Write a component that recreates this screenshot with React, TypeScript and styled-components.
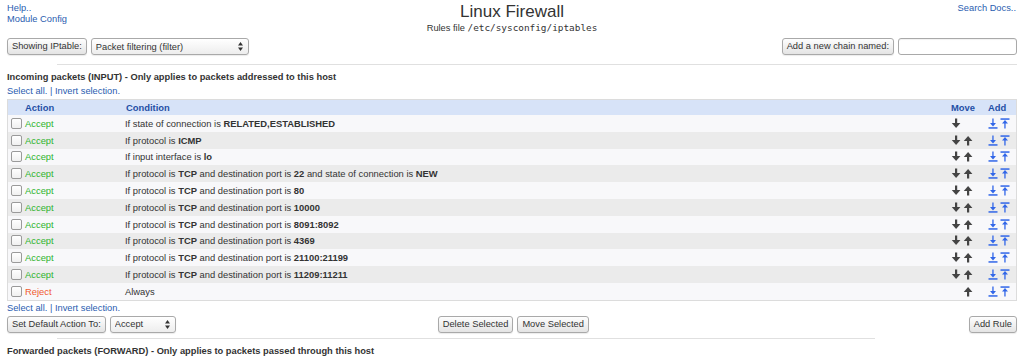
import React from "react";
import styled, { createGlobalStyle } from "styled-components";

const Global = createGlobalStyle`
  html, body { margin: 0; padding: 0; background: #ffffff; }
  body {
    font-family: "Liberation Sans", Arial, sans-serif;
    font-size: 9.3px;
    color: #333333;
  }
`;

const Page = styled.div`
  padding: 0 7px;
  display: flex;
  flex-direction: column;
`;

const Header = styled.div`
  display: grid;
  grid-template-columns: 1fr auto 1fr;
  align-items: start;
`;

const HeaderSide = styled.div<{ $right?: boolean }>`
  display: flex;
  flex-direction: column;
  align-items: ${(p) => (p.$right ? "flex-end" : "flex-start")};
  padding-top: 3px;
  line-height: 11px;
  padding-right: ${(p) => (p.$right ? "1px" : "0")};
`;

const Link = styled.a`
  color: #2a5db0;
  text-decoration: none;
  cursor: pointer;
`;

const HeaderCenter = styled.div`
  display: flex;
  flex-direction: column;
  align-items: center;
  padding-top: 2px;
`;

const Title = styled.div`
  font-size: 17px;
  line-height: 20px;
  color: #333333;
`;

const Subtitle = styled.div`
  font-size: 9.3px;
  line-height: 12px;
  color: #333333;
`;

const Mono = styled.span`
  font-family: "DejaVu Sans Mono", "Liberation Mono", monospace;
  font-size: 9.4px;
`;

const Toolbar = styled.div<{ $top: number }>`
  display: flex;
  align-items: center;
  gap: 4px;
  margin-top: ${(p) => p.$top}px;
  height: 17px;
`;

const Spacer = styled.div<{ $w?: number }>`
  flex: ${(p) => (p.$w ? "0 0 auto" : "1")};
  width: ${(p) => (p.$w ? `${p.$w}px` : "auto")};
`;

const Button = styled.button`
  height: 17px;
  padding: 0 4px;
  border: 1px solid #a9a9a9;
  border-radius: 3px;
  background: linear-gradient(#fefefe, #e4e4e4);
  box-shadow: 0 1px 1px rgba(0, 0, 0, 0.08);
  font-family: "Liberation Sans", Arial, sans-serif;
  font-size: 9.3px;
  color: #333333;
  line-height: 15px;
  white-space: nowrap;
`;

const SelectWrap = styled.div<{ $w: number }>`
  position: relative;
  width: ${(p) => p.$w}px;
  height: 17px;
`;

const Select = styled.select`
  appearance: none;
  width: 100%;
  height: 17px;
  padding: 0 14px 0 4px;
  border: 1px solid #a9a9a9;
  border-radius: 3px;
  background: linear-gradient(#ffffff, #ededed);
  box-shadow: 0 1px 1px rgba(0, 0, 0, 0.08);
  font-family: "Liberation Sans", Arial, sans-serif;
  font-size: 9.3px;
  color: #333333;
  outline: none;
`;

const SelectArrows = styled.svg`
  position: absolute;
  right: 6px;
  top: 4px;
  width: 5px;
  height: 9px;
  pointer-events: none;
`;

const TextInput = styled.input`
  width: 119px;
  height: 17px;
  box-sizing: border-box;
  border: 1px solid #a9a9a9;
  border-radius: 3px;
  background: #ffffff;
  box-shadow: inset 0 1px 1px rgba(0, 0, 0, 0.06);
`;

const HRule = styled.div<{ $w: string; $top: number }>`
  margin: ${(p) => p.$top}px 0 0 50px;
  width: ${(p) => p.$w};
  height: 1px;
  background: #e0e0e0;
`;

const SectionTitle = styled.div<{ $top: number }>`
  margin-top: ${(p) => p.$top}px;
  font-weight: bold;
  line-height: 12px;
  color: #333333;
`;

const LinkRow = styled.div<{ $top: number }>`
  margin-top: ${(p) => p.$top}px;
  line-height: 12px;
  color: #2a5db0;
`;

const Table = styled.div`
  margin-top: 2px;
  border: 1px solid #dcdcdc;
  display: flex;
  flex-direction: column;
`;

const Row = styled.div<{ $kind: "head" | "odd" | "even" }>`
  display: grid;
  grid-template-columns: 115px 1fr 37px 31px;
  align-items: center;
  height: ${(p) => (p.$kind === "head" ? "15px" : "16.8px")};
  background: ${(p) =>
    p.$kind === "head" ? "#d7e3f8" : p.$kind === "odd" ? "#f8f8fa" : "#ebebeb"};
  color: ${(p) => (p.$kind === "head" ? "#1f4fa6" : "#333333")};
  font-weight: ${(p) => (p.$kind === "head" ? "bold" : "normal")};
  font-size: 9.4px;
  white-space: nowrap;
`;

const Cell = styled.div<{ $pad?: number }>`
  display: flex;
  align-items: center;
  gap: 3px;
  padding-left: ${(p) => p.$pad ?? 2}px;
`;

const Check = styled.span`
  display: inline-block;
  width: 9px;
  height: 9px;
  border: 1px solid #9a9a9a;
  border-radius: 2px;
  background: linear-gradient(#ffffff, #f0f0f0);
`;

const Action = styled.span<{ $reject?: boolean }>`
  color: ${(p) => (p.$reject ? "#f05a30" : "#2eb42e")};
`;

const Icons = styled.div`
  display: flex;
  align-items: center;
  gap: 2px;
`;

const IconSlot = styled.span`
  display: inline-flex;
  width: 10px;
  height: 11px;
`;

const Down = () => (
  <svg width="10" height="11" viewBox="0 0 10 11">
    <rect x="4" y="0.5" width="2.2" height="6" fill="#444" />
    <polygon points="0.8,5 9.4,5 5.1,10" fill="#444" />
  </svg>
);

const Up = () => (
  <svg width="10" height="11" viewBox="0 0 10 11">
    <rect x="4" y="4.5" width="2.2" height="6" fill="#444" />
    <polygon points="0.8,6 9.4,6 5.1,1" fill="#444" />
  </svg>
);

const AddBelow = () => (
  <svg width="10" height="11" viewBox="0 0 10 11">
    <rect x="4.3" y="0.5" width="1.3" height="6" fill="#3166e8" />
    <polygon points="2,5 8,5 5,8.5" fill="#3166e8" />
    <rect x="0.5" y="9.2" width="9" height="1.5" fill="#3166e8" />
  </svg>
);

const AddAbove = () => (
  <svg width="10" height="11" viewBox="0 0 10 11">
    <rect x="0.5" y="0.3" width="9" height="1.5" fill="#3166e8" />
    <polygon points="2,5.5 8,5.5 5,2" fill="#3166e8" />
    <rect x="4.3" y="5" width="1.3" height="5.5" fill="#3166e8" />
  </svg>
);

type FwRule = {
  action: "Accept" | "Reject";
  cond: React.ReactNode;
  down: boolean;
  up: boolean;
};

const tcp = (port: string, extra?: React.ReactNode) => (
  <>
    If protocol is <b>TCP</b> and destination port is <b>{port}</b>
    {extra}
  </>
);

const rules: FwRule[] = [
  { action: "Accept", cond: <>If state of connection is <b>RELATED,ESTABLISHED</b></>, down: true, up: false },
  { action: "Accept", cond: <>If protocol is <b>ICMP</b></>, down: true, up: true },
  { action: "Accept", cond: <>If input interface is <b>lo</b></>, down: true, up: true },
  { action: "Accept", cond: tcp("22", <> and state of connection is <b>NEW</b></>), down: true, up: true },
  { action: "Accept", cond: tcp("80"), down: true, up: true },
  { action: "Accept", cond: tcp("10000"), down: true, up: true },
  { action: "Accept", cond: tcp("8091:8092"), down: true, up: true },
  { action: "Accept", cond: tcp("4369"), down: true, up: true },
  { action: "Accept", cond: tcp("21100:21199"), down: true, up: true },
  { action: "Accept", cond: tcp("11209:11211"), down: true, up: true },
  { action: "Reject", cond: <>Always</>, down: false, up: true },
];

const Arrows = () => (
  <SelectArrows viewBox="0 0 5 9">
    <polygon points="0,3.5 5,3.5 2.5,0" fill="#333" />
    <polygon points="0,5.5 5,5.5 2.5,9" fill="#333" />
  </SelectArrows>
);

export default function App() {
  return (
    <>
      <Global />
      <Page>
        <Header>
          <HeaderSide>
            <Link>Help..</Link>
            <Link>Module Config</Link>
          </HeaderSide>
          <HeaderCenter>
            <Title>Linux Firewall</Title>
            <Subtitle>
              Rules file <Mono>/etc/sysconfig/iptables</Mono>
            </Subtitle>
          </HeaderCenter>
          <HeaderSide $right>
            <Link>Search Docs..</Link>
          </HeaderSide>
        </Header>

        <Toolbar $top={4}>
          <Button>Showing IPtable:</Button>
          <SelectWrap $w={158}>
            <Select defaultValue="filter">
              <option value="filter">Packet filtering (filter)</option>
            </Select>
            <Arrows />
          </SelectWrap>
          <Spacer />
          <Button>Add a new chain named:</Button>
          <TextInput />
        </Toolbar>

        <HRule $w="calc(100% - 50px)" $top={9} />
        <SectionTitle $top={6}>
          Incoming packets (INPUT) - Only applies to packets addressed to this host
        </SectionTitle>
        <LinkRow $top={2}>
          <Link>Select all.</Link> | <Link>Invert selection.</Link>
        </LinkRow>

        <Table>
          <Row $kind="head">
            <Cell $pad={17}>Action</Cell>
            <Cell $pad={3}>Condition</Cell>
            <Cell $pad={3}>Move</Cell>
            <Cell $pad={3}>Add</Cell>
          </Row>
          {rules.map((r, i) => (
            <Row key={i} $kind={i % 2 === 0 ? "odd" : "even"}>
              <Cell $pad={3}>
                <Check />
                <Action $reject={r.action === "Reject"}>{r.action}</Action>
              </Cell>
              <Cell $pad={2}>
                <span>{r.cond}</span>
              </Cell>
              <Cell $pad={3}>
                <Icons>
                  <IconSlot>{r.down && <Down />}</IconSlot>
                  <IconSlot>{r.up && <Up />}</IconSlot>
                </Icons>
              </Cell>
              <Cell $pad={3}>
                <Icons>
                  <AddBelow />
                  <AddAbove />
                </Icons>
              </Cell>
            </Row>
          ))}
        </Table>

        <LinkRow $top={1}>
          <Link>Select all.</Link> | <Link>Invert selection.</Link>
        </LinkRow>

        <Toolbar $top={2}>
          <Button>Set Default Action To:</Button>
          <SelectWrap $w={66}>
            <Select defaultValue="accept">
              <option value="accept">Accept</option>
            </Select>
            <Arrows />
          </SelectWrap>
          <Spacer $w={254} />
          <Button>Delete Selected</Button>
          <Button>Move Selected</Button>
          <Spacer />
          <Button>Add Rule</Button>
        </Toolbar>

        <HRule $w="818px" $top={5} />
        <SectionTitle $top={6}>
          Forwarded packets (FORWARD) - Only applies to packets passed through this host
        </SectionTitle>
      </Page>
    </>
  );
}
